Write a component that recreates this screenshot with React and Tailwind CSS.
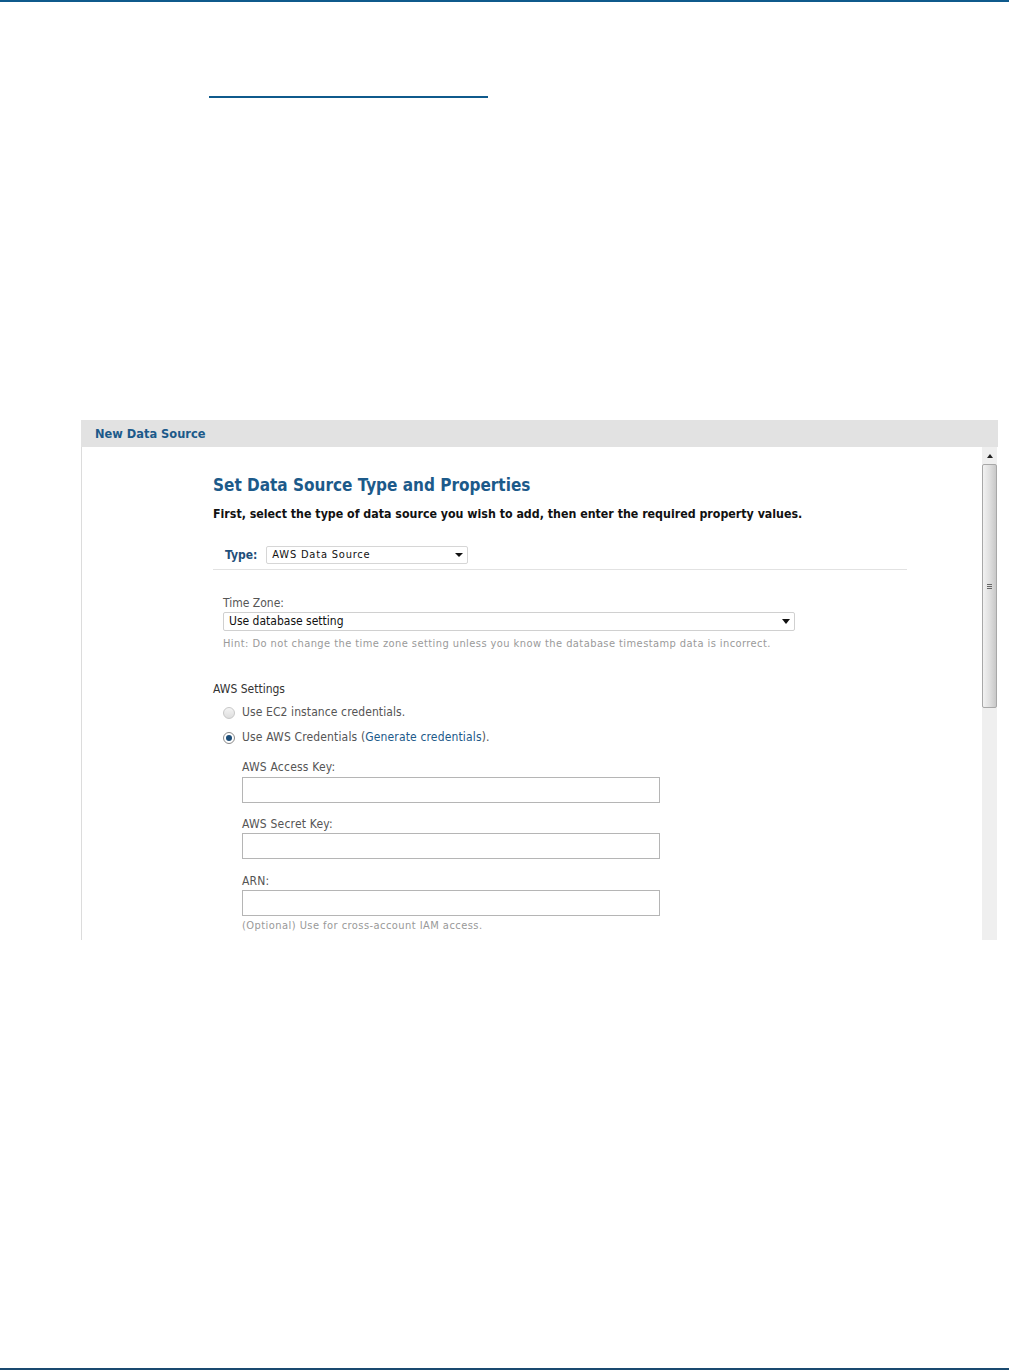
export default function App() {
  const f = "font-['DejaVu_Sans_Condensed','DejaVu_Sans',sans-serif]";
  return (
    <div className={`relative w-full h-[1370px] bg-white flex flex-col ${f}`}>
      <div className="h-[2px] w-full bg-[#0f5a8c]" />
      <div className="ml-[209px] mt-[94px] w-[279px] h-[2px] bg-[#0f5a8c]" />
      <div className="ml-[81px] mt-[322px] w-[917px] flex flex-col">
        <div className="h-[27px] bg-[#e2e2e2] flex items-center pl-[14px]">
          <span className="text-[12.7px] font-bold text-[#1c5a8a]">New Data Source</span>
        </div>
        <div className="h-[493px] flex border-l border-[#dcdcdc]">
          <div className="flex-1 pl-[131px] pr-[75px] pt-[27px]">
            <h1 className="text-[17px] font-bold text-[#1c5a8a] leading-[22px]">Set Data Source Type and Properties</h1>
            <p className="mt-[11px] text-[12.3px] font-bold text-[#111] leading-[15px]">First, select the type of data source you wish to add, then enter the required property values.</p>
            <div className="mt-[24px] flex items-center pl-[12px] pb-[5px] border-b border-[#e2e2e2]">
              <span className="text-[12px] font-bold text-[#1f4f7a] mr-[9px] leading-[15px]">Type:</span>
              <div className="w-[202px] h-[18px] border border-[#d6d6d6] rounded-[2px] flex items-center justify-between pl-[5px] pr-[4px]">
                <span className="text-[11px] text-[#111] tracking-[0.8px] leading-[14px]">AWS Data Source</span>
                <span className="w-0 h-0 border-l-[4px] border-r-[4px] border-t-[4px] border-l-transparent border-r-transparent border-t-[#111]" />
              </div>
            </div>
            <div className="pl-[10px] mt-[26px]">
              <div className="text-[12px] text-[#555] leading-[15px]">Time Zone:</div>
              <div className="mt-[1px] w-[572px] h-[19px] border border-[#d0d0d0] rounded-[2px] flex items-center justify-between pl-[5px] pr-[4px]">
                <span className="text-[12px] text-[#111] leading-[15px]">Use database setting</span>
                <span className="w-0 h-0 border-l-[4px] border-r-[4px] border-t-[5px] border-l-transparent border-r-transparent border-t-[#111]" />
              </div>
              <div className="mt-[6px] text-[11px] text-[#9a9a9a] tracking-[0.43px] leading-[13px]">Hint: Do not change the time zone setting unless you know the database timestamp data is incorrect.</div>
            </div>
            <div className="mt-[32px] text-[12px] text-[#333] leading-[15px]">AWS Settings</div>
            <div className="mt-[8px] pl-[10px] flex items-center gap-[7px] h-[15px]">
              <span className="w-[12px] h-[12px] rounded-full border border-[#c8c8c8] bg-gradient-to-b from-[#f4f4f4] to-[#dedede]" />
              <span className="text-[12px] text-[#555] leading-[15px] tracking-[0.1px]">Use EC2 instance credentials.</span>
            </div>
            <div className="mt-[10px] pl-[10px] flex items-center gap-[7px] h-[15px]">
              <span className="w-[12px] h-[12px] rounded-full border border-[#8a8a8a] bg-white flex items-center justify-center">
                <span className="w-[6px] h-[6px] rounded-full bg-[#1d4d78]" />
              </span>
              <span className="text-[12px] text-[#555] leading-[15px] tracking-[0.15px]">Use AWS Credentials (<span className="text-[#1c5a8a]">Generate credentials</span>).</span>
            </div>
            <div className="pl-[29px] mt-[15px]">
              <div className="text-[12px] text-[#555] leading-[15px] tracking-[0.2px]">AWS Access Key:</div>
              <div className="mt-[2px] w-[418px] h-[26px] border border-[#b5b5b5]" />
              <div className="mt-[14px] text-[12px] text-[#555] leading-[15px] tracking-[0.2px]">AWS Secret Key:</div>
              <div className="mt-[1px] w-[418px] h-[26px] border border-[#b5b5b5]" />
              <div className="mt-[15px] text-[12px] text-[#555] leading-[15px] tracking-[0.2px]">ARN:</div>
              <div className="mt-[1px] w-[418px] h-[26px] border border-[#b5b5b5]" />
              <div className="mt-[3px] text-[11px] text-[#999] tracking-[0.45px] leading-[13px]">(Optional) Use for cross-account IAM access.</div>
            </div>
          </div>
          <div className="w-[15px] mr-[1px] bg-[#efefef] flex flex-col">
            <div className="h-[17px] flex items-center justify-center">
              <span className="w-0 h-0 border-l-[3px] border-r-[3px] border-b-[4px] border-l-transparent border-r-transparent border-b-[#222]" />
            </div>
            <div className="h-[244px] border border-[#a8a8a8] rounded-[2px] bg-gradient-to-r from-[#f2f2f2] via-[#e0e0e0] to-[#c8c8c8] flex items-center justify-center">
              <div className="flex flex-col gap-[1px]">
                <span className="w-[5px] h-[1px] bg-[#666]" />
                <span className="w-[5px] h-[1px] bg-[#666]" />
                <span className="w-[5px] h-[1px] bg-[#666]" />
              </div>
            </div>
          </div>
        </div>
      </div>
      <div className="mt-auto h-[2px] w-full bg-[#1a4a70]" />
    </div>
  );
}
